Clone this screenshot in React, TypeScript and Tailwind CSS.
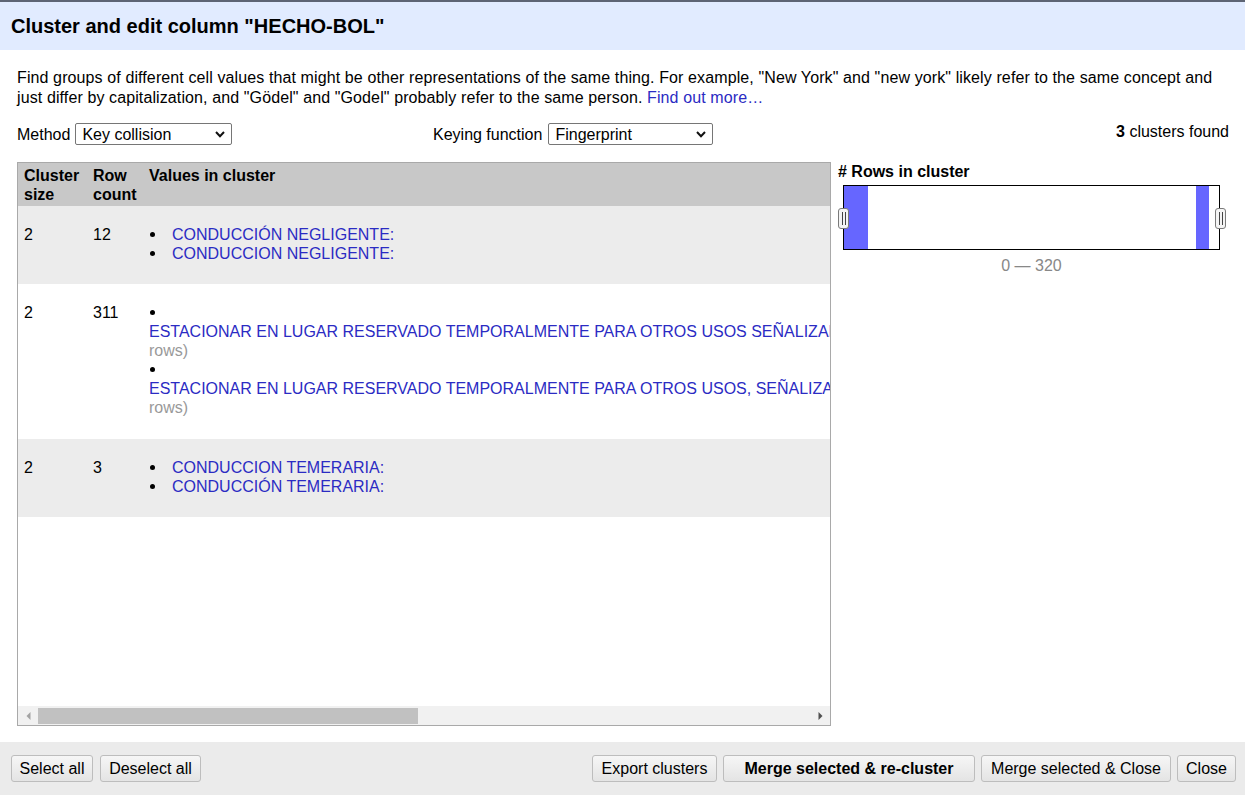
const LINK = "text-[#2b2bc3]";

function Dot() {
  return (
    <span className="flex h-[19px] w-[23px] shrink-0 items-center">
      <span className="ml-[1px] h-[5px] w-[5px] rounded-full bg-black" />
    </span>
  );
}

function FakeSelect({ value, width }: { value: string; width: string }) {
  return (
    <div
      className={`flex h-[22px] items-center justify-between rounded-[2px] border border-[#767676] bg-white pl-[6px] pr-[6px] ${width}`}
    >
      <span className="leading-[19px]">{value}</span>
      <svg width="10" height="7" viewBox="0 0 10 7" className="shrink-0">
        <polyline points="1,1 5,5.2 9,1" fill="none" stroke="#111" strokeWidth="2" />
      </svg>
    </div>
  );
}

function Btn({ label, width, bold }: { label: string; width: string; bold?: boolean }) {
  return (
    <button
      className={`flex h-[27px] items-center justify-center rounded-[3px] border border-[#bdbdbd] bg-gradient-to-b from-[#f6f6f6] to-[#e4e4e4] text-[16px] text-black ${width} ${bold ? "font-bold" : ""}`}
    >
      {label}
    </button>
  );
}

function Handle({ side }: { side: "left" | "right" }) {
  return (
    <div
      className={`absolute top-[22px] flex h-[21px] w-[11px] items-center justify-center gap-[2px] rounded-[3px] border border-[#7a7a7a] bg-[#f4f4f4] ${side === "left" ? "left-[-6px]" : "right-[-7px]"}`}
    >
      <span className="h-[13px] w-px bg-[#444]" />
      <span className="h-[13px] w-px bg-[#444]" />
    </div>
  );
}

function ShortRow({ size, count, values, shaded }: { size: number; count: number; values: string[]; shaded: boolean }) {
  return (
    <div className={`grid grid-cols-[69px_56px_1fr] pt-[19px] pb-[21px] ${shaded ? "bg-[#ececec]" : "bg-white"}`}>
      <div className="pl-[6px]">{size}</div>
      <div className="pl-[6px]">{count}</div>
      <div className="pl-[6px]">
        {values.map((v) => (
          <div key={v} className="flex">
            <Dot />
            <span className={`${LINK} whitespace-nowrap`}>{v}</span>
          </div>
        ))}
      </div>
    </div>
  );
}

function LongRow({ size, count, values }: { size: number; count: number; values: { text: string; rows: number }[] }) {
  return (
    <div className="grid grid-cols-[69px_56px_1fr] bg-white pt-[19px] pb-[22px]">
      <div className="pl-[6px]">{size}</div>
      <div className="pl-[6px]">{count}</div>
      <div className="min-w-0 pl-[6px]">
        {values.map((v) => (
          <div key={v.text}>
            <Dot />
            <div className="whitespace-nowrap">
              <span className={LINK}>{v.text}</span> <span className="text-[#999]">({v.rows}</span>
            </div>
            <div className="text-[#999]">rows)</div>
          </div>
        ))}
      </div>
    </div>
  );
}

export default function App() {
  return (
    <div className="h-[795px] w-[1245px] overflow-hidden bg-white font-['Liberation_Sans',Arial,sans-serif] text-[16px] leading-[19px] text-black">
      <div className="h-[2px] bg-[#5d6474]" />
      <div className="flex h-[48px] items-center bg-[#e1ebff] pl-[11px]">
        <h1 className="text-[20px] font-bold">Cluster and edit column "HECHO-BOL"</h1>
      </div>

      <div className="pl-[17px] pr-[16px]">
        <p className="mt-[18px] w-[1205px] leading-[20px] tracking-[0.11px]">
          Find groups of different cell values that might be other representations of the same thing. For example, "New York"
          and "new york" likely refer to the same concept and just differ by capitalization, and "Gödel" and "Godel" probably
          refer to the same person. <span className={LINK}>Find out more…</span>
        </p>

        <div className="mt-[15px] flex h-[22px] items-center">
          <div className="flex w-[416px] items-center">
            <span>Method</span>
            <span className="ml-[5px]">
              <FakeSelect value="Key collision" width="w-[157px]" />
            </span>
          </div>
          <div className="flex items-center">
            <span>Keying function</span>
            <span className="ml-[6px]">
              <FakeSelect value="Fingerprint" width="w-[165px]" />
            </span>
          </div>
          <div className="flex-1 self-start text-right leading-[18px]">
            <b>3</b> clusters found
          </div>
        </div>

        <div className="mt-[17px] flex">
          <div className="flex h-[564px] w-[814px] flex-col border border-[#a9a9a9]">
            <div className="min-h-0 flex-1 overflow-hidden">
              <div className="grid grid-cols-[69px_56px_1fr] bg-[#c8c8c8] pt-[3px] pb-[2px] font-bold">
                <div className="pl-[6px]">
                  Cluster
                  <br />
                  size
                </div>
                <div className="pl-[6px]">
                  Row
                  <br />
                  count
                </div>
                <div className="pl-[6px]">Values in cluster</div>
              </div>
              <ShortRow size={2} count={12} values={["CONDUCCIÓN NEGLIGENTE:", "CONDUCCION NEGLIGENTE:"]} shaded />
              <LongRow
                size={2}
                count={311}
                values={[
                  { text: "ESTACIONAR EN LUGAR RESERVADO TEMPORALMENTE PARA OTROS USOS SEÑALIZADO:", rows: 156 },
                  { text: "ESTACIONAR EN LUGAR RESERVADO TEMPORALMENTE PARA OTROS USOS, SEÑALIZADO:", rows: 155 },
                ]}
              />
              <ShortRow size={2} count={3} values={["CONDUCCION TEMERARIA:", "CONDUCCIÓN TEMERARIA:"]} shaded />
            </div>
            <div className="flex h-[19px] items-center bg-[#f1f1f1]">
              <div className="flex w-[20px] justify-center">
                <svg width="5" height="8" viewBox="0 0 5 8">
                  <polygon points="4.5,0 0.5,4 4.5,8" fill="#a3a3a3" />
                </svg>
              </div>
              <div className="h-[16px] w-[380px] bg-[#c1c1c1]" />
              <div className="flex-1" />
              <div className="flex w-[20px] justify-center">
                <svg width="5" height="8" viewBox="0 0 5 8">
                  <polygon points="0.5,0 4.5,4 0.5,8" fill="#505050" />
                </svg>
              </div>
            </div>
          </div>

          <div className="flex-1">
            <div className="pl-[7px] font-bold"># Rows in cluster</div>
            <div className="relative ml-[12px] mt-[4px] flex h-[65px] w-[377px] border border-black bg-white">
              <div className="w-[24px] bg-[#6666ff]" />
              <div className="flex-1" />
              <div className="mr-[10px] w-[13px] bg-[#6666ff]" />
              <Handle side="left" />
              <Handle side="right" />
            </div>
            <div className="ml-[12px] mt-[6px] w-[377px] text-center text-[#888]">0 — 320</div>
          </div>
        </div>
      </div>

      <div className="mt-[16px] flex h-[53px] items-start bg-[#ebebeb] pt-[13px] pl-[11px] pr-[9px]">
        <div className="flex gap-[7px]">
          <Btn label="Select all" width="w-[82px]" />
          <Btn label="Deselect all" width="w-[101px]" />
        </div>
        <div className="flex-1" />
        <div className="flex gap-[6px]">
          <Btn label="Export clusters" width="w-[125px]" />
          <Btn label="Merge selected & re-cluster" width="w-[252px]" bold />
          <Btn label="Merge selected & Close" width="w-[190px]" />
          <Btn label="Close" width="w-[59px]" />
        </div>
      </div>
    </div>
  );
}
